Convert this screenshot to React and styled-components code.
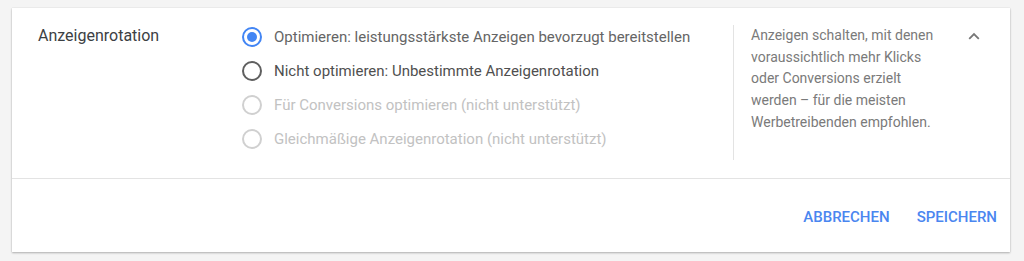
import React, { useState } from "react";
import styled, { createGlobalStyle } from "styled-components";

const Global = createGlobalStyle`
  html, body { margin: 0; padding: 0; background: #f4f4f4; }
  body { font-family: Roboto, "Noto Sans", Arial, sans-serif; }
  * { box-sizing: border-box; }
`;

const Page = styled.div`
  padding: 8px 14px 9px 12px;
`;

const Card = styled.div`
  background: #fff;
  height: 244px;
  display: flex;
  flex-direction: column;
  box-shadow: 0 1px 2px rgba(0,0,0,0.28), 0 0 1px rgba(0,0,0,0.12);
`;

const Body = styled.div`
  display: flex;
  height: 171px;
  border-bottom: 1px solid #e3e3e3;
  padding: 17px 0 0 26px;
`;

const Label = styled.div`
  width: 204px;
  font-size: 16px;
  line-height: 22px;
  color: #3c4043;
`;

const Options = styled.div`
  width: 491px;
  display: flex;
  flex-direction: column;
  gap: 12px;
  padding-top: 1px;
`;

const Option = styled.label`
  display: flex;
  align-items: center;
  gap: 12px;
  height: 22px;
  font-size: 15px;
  color: ${(p) => (p.$disabled ? "#c2c2c2" : p.$checked ? "#656565" : "#4f4f4f")};
  cursor: ${(p) => (p.$disabled ? "default" : "pointer")};
`;

const Radio = styled.span`
  width: 20px;
  height: 20px;
  border-radius: 50%;
  flex: none;
  border: 2px solid
    ${(p) => (p.$disabled ? "#d0d0d0" : p.$checked ? "#4285f4" : "#5f5f5f")};
  display: flex;
  align-items: center;
  justify-content: center;
  &::after {
    content: "";
    width: 10px;
    height: 10px;
    border-radius: 50%;
    background: #4285f4;
    display: ${(p) => (p.$checked ? "block" : "none")};
  }
`;

const Help = styled.div`
  display: flex;
  height: 135px;
  border-left: 1px solid #e3e3e3;
  padding-left: 17px;
`;

const HelpText = styled.p`
  margin: 0;
  width: 192px;
  font-size: 14px;
  line-height: 21.7px;
  color: #7a7a7a;
`;

const Toggle = styled.button`
  border: none;
  background: none;
  padding: 0;
  margin: 5px 0 0 24px;
  width: 14px;
  height: 12px;
  display: flex;
  align-items: center;
  justify-content: center;
  cursor: pointer;
`;

const Footer = styled.div`
  flex: 1;
  display: flex;
  justify-content: flex-end;
  align-items: center;
  padding: 2px 5px 0 0;
  gap: 11px;
`;

const TextButton = styled.button`
  border: none;
  background: none;
  font-family: Roboto, Arial, sans-serif;
  font-weight: 500;
  font-size: 15px;
  color: #4a86f0;
  padding: 8px 8px;
  cursor: pointer;
`;

const options = [
  { label: "Optimieren: leistungsstärkste Anzeigen bevorzugt bereitstellen" },
  { label: "Nicht optimieren: Unbestimmte Anzeigenrotation" },
  { label: "Für Conversions optimieren (nicht unterstützt)", disabled: true },
  { label: "Gleichmäßige Anzeigenrotation (nicht unterstützt)", disabled: true },
];

export default function App() {
  const [sel, setSel] = useState(0);
  return (
    <Page>
      <Global />
      <Card>
        <Body>
          <Label>Anzeigenrotation</Label>
          <Options>
            {options.map((o, i) => (
              <Option
                key={i}
                $disabled={o.disabled}
                $checked={sel === i}
                onClick={() => !o.disabled && setSel(i)}
              >
                <Radio $checked={sel === i} $disabled={o.disabled} />
                {o.label}
              </Option>
            ))}
          </Options>
          <Help>
            <HelpText>
              Anzeigen schalten, mit denen voraussichtlich mehr Klicks oder
              Conversions erzielt werden – für die meisten Werbetreibenden
              empfohlen.
            </HelpText>
            <Toggle aria-label="Einklappen">
              <svg width="12" height="8" viewBox="0 0 12 8">
                <path d="M1.2 6.8 L6 2 L10.8 6.8" fill="none" stroke="#777" strokeWidth="1.8" />
              </svg>
            </Toggle>
          </Help>
        </Body>
        <Footer>
          <TextButton>ABBRECHEN</TextButton>
          <TextButton>SPEICHERN</TextButton>
        </Footer>
      </Card>
    </Page>
  );
}
